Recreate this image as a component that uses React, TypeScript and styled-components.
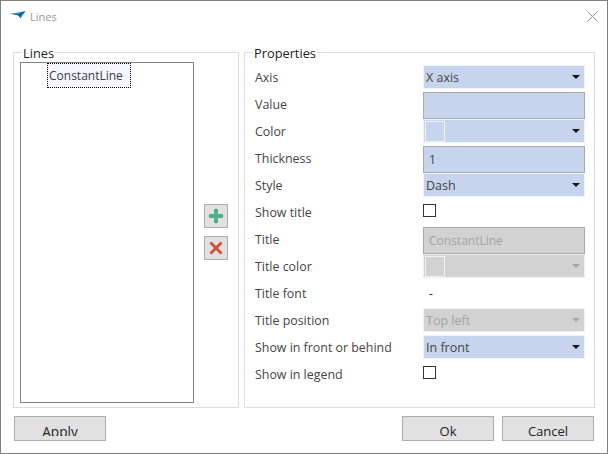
import styled, { createGlobalStyle } from 'styled-components'

const GlobalStyle = createGlobalStyle`
  html, body {
    margin: 0;
    padding: 0;
    background: #fff;
  }
  * {
    box-sizing: border-box;
  }
`

type Row =
  | { label: string; kind: 'combo'; value?: string; disabled?: boolean; swatch?: boolean }
  | { label: string; kind: 'input'; value?: string; disabled?: boolean }
  | { label: string; kind: 'check' }
  | { label: string; kind: 'plain'; value: string }

const rows: Row[] = [
  { label: 'Axis', kind: 'combo', value: 'X axis' },
  { label: 'Value', kind: 'input' },
  { label: 'Color', kind: 'combo', swatch: true },
  { label: 'Thickness', kind: 'input', value: '1' },
  { label: 'Style', kind: 'combo', value: 'Dash' },
  { label: 'Show title', kind: 'check' },
  { label: 'Title', kind: 'input', value: 'ConstantLine', disabled: true },
  { label: 'Title color', kind: 'combo', swatch: true, disabled: true },
  { label: 'Title font', kind: 'plain', value: '-' },
  { label: 'Title position', kind: 'combo', value: 'Top left', disabled: true },
  { label: 'Show in front or behind', kind: 'combo', value: 'In front' },
  { label: 'Show in legend', kind: 'check' },
]

function Field({ row }: { row: Row }) {
  if (row.kind === 'check') return <CheckBox />
  if (row.kind === 'plain') return <PlainValue>{row.value}</PlainValue>
  if (row.kind === 'input') return <TextInput $disabled={row.disabled}>{row.value}</TextInput>
  return (
    <Combo $disabled={row.disabled}>
      {row.swatch ? <Swatch /> : <span>{row.value}</span>}
      <Caret $disabled={row.disabled} />
    </Combo>
  )
}

export default function App() {
  return (
    <Root>
      <GlobalStyle />
      <TitleBar>
        <svg width="17" height="8" viewBox="0 0 17 8">
          <path d="M4 2.4 L16.5 0 L11.5 7.5 L9.5 4.6 Z" fill="#2a86cc" />
          <path d="M0 2.6 L9.5 4.6 L11.5 7.5 L10.5 5.5 L16.5 0 L9 3.8 L4 2.4 Z" fill="#14527f" />
        </svg>
        <TitleText>Lines</TitleText>
        <CloseIcon width="11" height="11" viewBox="0 0 11 11">
          <path d="M0.5 0.5 L10.5 10.5 M10.5 0.5 L0.5 10.5" stroke="#969696" strokeWidth="1" fill="none" />
        </CloseIcon>
      </TitleBar>

      <Body>
        <LinesGroup>
          <Legend>Lines</Legend>
          <ListBox>
            <ListItem>ConstantLine</ListItem>
          </ListBox>
          <ListActions>
            <IconButton aria-label="Add">
              <svg width="14" height="14" viewBox="0 0 14 14">
                <path d="M5 0 H9 V5 H14 V9 H9 V14 H5 V9 H0 V5 H5 Z" fill="#4fb088" />
              </svg>
            </IconButton>
            <IconButton aria-label="Remove">
              <svg width="14" height="14" viewBox="0 0 14 14">
                <path d="M2.5 0.5 L7 5 L11.5 0.5 L13.5 2.5 L9 7 L13.5 11.5 L11.5 13.5 L7 9 L2.5 13.5 L0.5 11.5 L5 7 L0.5 2.5 Z" fill="#d2503a" />
              </svg>
            </IconButton>
          </ListActions>
        </LinesGroup>

        <PropertiesGroup>
          <Legend>Properties</Legend>
          <PropertyGrid>
            {rows.map((row) => (
              <PropertyRow key={row.label}>
                <Label>{row.label}</Label>
                <Field row={row} />
              </PropertyRow>
            ))}
          </PropertyGrid>
        </PropertiesGroup>
      </Body>

      <Footer>
        <ClippedButton>
          <span>Apply</span>
        </ClippedButton>
        <FooterRight>
          <Button>Ok</Button>
          <Button>Cancel</Button>
        </FooterRight>
      </Footer>
    </Root>
  )
}

const Root = styled.div`
  width: 608px;
  height: 454px;
  border: 1px solid #7f7f7f;
  background: #fff;
  font-family: 'Open Sans', 'Liberation Sans', sans-serif;
  font-size: 12px;
  color: #444;
  overflow: hidden;
`

const TitleBar = styled.div`
  height: 51px;
  display: flex;
  align-items: flex-start;
  padding: 10px 9px 0 8px;
`

const TitleText = styled.div`
  margin-left: 4px;
  margin-top: -1px;
  color: #969696;
  font-size: 11px;
  line-height: 14px;
`

const CloseIcon = styled.svg`
  margin-left: auto;
`

const Body = styled.div`
  height: 356px;
  padding: 0 12px;
  display: flex;
  gap: 5px;
`

const Group = styled.div`
  position: relative;
  height: 100%;
  border: 1px solid #dcdcdc;
`

const LinesGroup = styled(Group)`
  width: 226px;
  padding: 9px 0 4px 6px;
  display: flex;
`

const PropertiesGroup = styled(Group)`
  width: 351px;
  padding: 12px 9px 0 10px;
`

const Legend = styled.div`
  position: absolute;
  top: -7px;
  left: 8px;
  padding: 0 1px;
  background: #fff;
  color: #222;
  font-size: 12.8px;
  line-height: 15px;
`

const ListBox = styled.div`
  width: 174px;
  height: 100%;
  border: 1px solid #7f8489;
  padding-left: 26px;
`

const ListItem = styled.div`
  width: 84px;
  height: 25px;
  border: 1px dotted #000;
  background: #f4f7fd;
  padding-left: 1px;
  color: #3a3a4a;
  line-height: 23px;
  white-space: nowrap;
`

const ListActions = styled.div`
  margin: 142px 0 0 10px;
  display: flex;
  flex-direction: column;
  gap: 8px;
`

const IconButton = styled.button`
  width: 24px;
  height: 24px;
  padding: 0;
  display: flex;
  align-items: center;
  justify-content: center;
  background: #e1e1e1;
  border: 1px solid #adadad;
`

const PropertyGrid = styled.div`
  display: flex;
  flex-direction: column;
`

const PropertyRow = styled.div`
  height: 27px;
  display: grid;
  grid-template-columns: 168px 162px;
  align-items: start;
`

const Label = styled.div`
  color: #444;
  font-size: 12.4px;
  line-height: 26px;
  white-space: nowrap;
`

const Combo = styled.div<{ $disabled?: boolean }>`
  height: 24px;
  padding: 0 4px 0 2px;
  display: flex;
  align-items: center;
  justify-content: space-between;
  border: 1px solid ${(p) => (p.$disabled ? '#f0f0f0' : '#eef3fb')};
  background: ${(p) => (p.$disabled ? '#d2d2d2' : '#c6d5ed')};
  color: ${(p) => (p.$disabled ? '#a3a3a3' : '#444')};
  font-size: 12.5px;
`

const Swatch = styled.div`
  width: 20px;
  height: 21px;
  margin-left: -1px;
  border: 1px solid #f2f2f2;
`

const Caret = styled.div<{ $disabled?: boolean }>`
  width: 0;
  height: 0;
  border-left: 4px solid transparent;
  border-right: 4px solid transparent;
  border-top: 4px solid ${(p) => (p.$disabled ? '#a3a3a3' : '#111')};
`

const TextInput = styled.div<{ $disabled?: boolean }>`
  height: 27px;
  padding-left: 5px;
  display: flex;
  align-items: center;
  border: 1px solid #a9a9a9;
  background: ${(p) => (p.$disabled ? '#d2d2d2' : '#c6d5ed')};
  color: ${(p) => (p.$disabled ? '#a3a3a3' : '#444')};
`

const CheckBox = styled.div`
  width: 13px;
  height: 13px;
  margin-top: 4px;
  border: 1px solid #333;
  background: #fff;
`

const PlainValue = styled.div`
  padding-left: 6px;
  line-height: 26px;
  color: #222;
`

const Footer = styled.div`
  padding: 8px 13px 0 13px;
  display: flex;
  justify-content: space-between;
`

const FooterRight = styled.div`
  display: flex;
  gap: 8px;
`

const Button = styled.button`
  width: 92px;
  height: 25px;
  padding: 5px 0 0;
  background: #e1e1e1;
  border: 1px solid #adadad;
  color: #222;
  font-family: 'Open Sans', 'Liberation Sans', sans-serif;
  font-size: 13px;
  line-height: 17px;
  overflow: hidden;
`

const ClippedButton = styled(Button)`
  padding: 0;
  display: flex;
  justify-content: center;
  align-items: flex-start;

  span {
    display: block;
    height: 19px;
    overflow: hidden;
    font-size: 13.6px;
    line-height: 29px;
  }
`
